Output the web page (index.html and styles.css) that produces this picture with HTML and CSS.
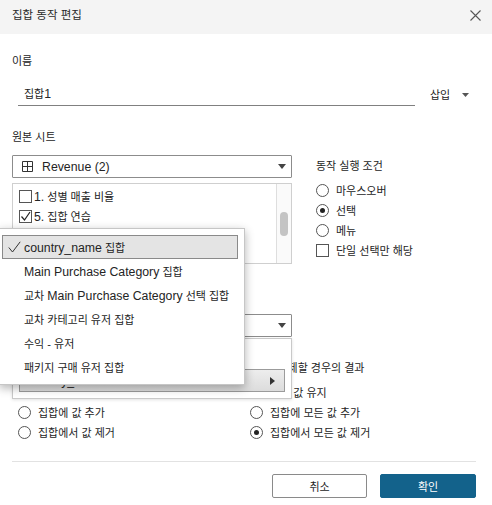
FILE: index.html
```html
<!DOCTYPE html>
<html lang="ko">
<head>
<meta charset="utf-8">
<title>집합 동작 편집</title>
<link rel="stylesheet" href="styles.css">
</head>
<body>
<div class="dialog">
  <header class="titlebar">
    <span class="title">집합 동작 편집</span>
    <svg class="close" width="11" height="11" viewBox="0 0 11 11"><path d="M0.5 0.5 L10.5 10.5 M10.5 0.5 L0.5 10.5" stroke="#555" stroke-width="1.1" fill="none"/></svg>
  </header>

  <main class="content">
    <div class="label">이름</div>
    <div class="name-row">
      <div class="name-input">집합<span class="en">1</span></div>
      <div class="insert">삽입 <svg class="caret" width="7" height="4" viewBox="0 0 7 4"><polygon points="0,0 7,0 3.5,4" fill="#555"/></svg></div>
    </div>

    <div class="label gap-source">원본 시트</div>
    <div class="source-row">
      <div class="source-col">
        <div class="select">
          <svg class="grid-icon" width="11" height="11" viewBox="0 0 11 11"><path d="M0.5 0.5 H10.5 V10.5 H0.5 Z M5.5 0.5 V10.5 M0.5 5.5 H10.5" stroke="#333" stroke-width="1" fill="none"/></svg>
          <span class="select-text en">Revenue (2)</span>
          <svg class="caret push" width="8" height="5" viewBox="0 0 8 5"><polygon points="0,0 8,0 4,5" fill="#444"/></svg>
        </div>
        <div class="sheet-list">
          <div class="sheet-items">
            <div class="check-row"><span class="box"></span><span><span class="en">1.</span> 성별 매출 비율</span></div>
            <div class="check-row"><span class="box checked"><svg width="11" height="11" viewBox="0 0 11 11"><path d="M1.5 5.5 L4.5 9 L10 1" stroke="#222" stroke-width="1.2" fill="none"/></svg></span><span><span class="en">5.</span> 집합 연습</span></div>
          </div>
          <div class="scrollbar"><div class="thumb"></div></div>
        </div>
      </div>

      <div class="run-col">
        <div class="label">동작 실행 조건</div>
        <div class="options">
          <div class="opt"><span class="radio"></span><span>마우스오버</span></div>
          <div class="opt"><span class="radio on"></span><span>선택</span></div>
          <div class="opt"><span class="radio"></span><span>메뉴</span></div>
          <div class="opt"><span class="box"></span><span>단일 선택만 해당</span></div>
        </div>
      </div>
    </div>

    <div class="select target">
      <svg class="caret push" width="8" height="5" viewBox="0 0 8 5"><polygon points="0,0 8,0 4,5" fill="#444"/></svg>
    </div>

    <div class="result-row">
      <div class="result-col left">
        <div class="label-spacer"></div>
        <div class="options small">
          <div class="opt"><span class="radio on"></span></div>
          <div class="opt"><span class="radio"></span><span>집합에 값 추가</span></div>
          <div class="opt"><span class="radio"></span><span>집합에서 값 제거</span></div>
        </div>
      </div>
      <div class="result-col right">
        <div class="label">선택을 해제할 경우의 결과</div>
        <div class="options small">
          <div class="opt"><span class="radio"></span><span>집합 값 유지</span></div>
          <div class="opt"><span class="radio"></span><span>집합에 모든 값 추가</span></div>
          <div class="opt"><span class="radio on"></span><span>집합에서 모든 값 제거</span></div>
        </div>
      </div>
    </div>

    <footer class="footer">
      <button class="btn cancel">취소</button>
      <button class="btn ok">확인</button>
    </footer>
  </main>

  <div class="dropdown">
    <div class="dd-row">
      <span class="en">country_name</span>
      <svg class="push" width="5" height="8" viewBox="0 0 5 8"><polygon points="0,0 5,4 0,8" fill="#333"/></svg>
    </div>
  </div>

  <div class="menu">
    <div class="menu-item active"><span class="mcheck"><svg width="13" height="12" viewBox="0 0 13 12"><path d="M0.8 6.5 L4.5 11 L12.2 0.8" stroke="#333" stroke-width="1" fill="none"/></svg></span><span><span class="en">country_name</span> 집합</span></div>
    <div class="menu-item"><span class="mcheck"></span><span><span class="en">Main Purchase Category</span> 집합</span></div>
    <div class="menu-item"><span class="mcheck"></span><span>교차 <span class="en">Main Purchase Category</span> 선택 집합</span></div>
    <div class="menu-item"><span class="mcheck"></span><span>교차 카테고리 유저 집합</span></div>
    <div class="menu-item"><span class="mcheck"></span><span>수익 - 유저</span></div>
    <div class="menu-item"><span class="mcheck"></span><span>패키지 구매 유저 집합</span></div>
  </div>
</div>
</body>
</html>
```

FILE: styles.css
```css
* { box-sizing: border-box; }
html, body { margin: 0; padding: 0; }
body {
  width: 492px;
  height: 505px;
  overflow: hidden;
  background: #fff;
  font-family: "Liberation Sans", "Noto Sans CJK KR", sans-serif;
  font-size: 11px;
  color: #242424;
}
.en { font-size: 12.3px; }
.dialog { position: relative; width: 492px; height: 505px; overflow: hidden; }

.titlebar {
  height: 34px;
  background: #f4f4f4;
  display: flex;
  align-items: center;
  justify-content: space-between;
  padding: 0 11px 4px 12px;
}
.title { line-height: 16px; color: #2a2a2a; font-size: 11.5px; }
.close { display: block; }

.content { padding: 19px 16px 0 12px; }
.label { line-height: 16px; white-space: nowrap; }
.label-spacer { height: 16px; }

.name-row { display: flex; align-items: center; margin-top: 15px; }
.name-input {
  width: 397px;
  margin-left: 6px;
  height: 22px;
  line-height: 21px;
  padding-left: 6px;
  border-bottom: 1px solid #808080;
}
.insert { margin-left: 15px; display: flex; align-items: center; line-height: 16px; }
.insert .caret { margin-left: 12px; }

.gap-source { margin-top: 23px; }
.source-row { display: flex; margin-top: 10px; }
.source-col { width: 280px; }

.select {
  height: 23px;
  border: 1px solid #8c8c8c;
  border-radius: 1px;
  display: flex;
  align-items: center;
  padding: 0 5px 0 9px;
  background: #fff;
}
.grid-icon { display: block; margin-right: 9px; }
.select-text { white-space: nowrap; }
.push { margin-left: auto; display: block; }

.sheet-list {
  margin-top: 5px;
  height: 81px;
  border: 1px solid #cfcfcf;
  display: flex;
  overflow: hidden;
}
.sheet-items { flex: 1; padding: 2px 0 0 6px; }
.check-row { height: 20px; display: flex; align-items: center; white-space: nowrap; }
.box {
  width: 13px;
  height: 13px;
  border: 1px solid #555;
  background: #fff;
  display: flex;
  align-items: center;
  justify-content: center;
  flex: none;
}
.box svg { display: block; }
.check-row .box { margin-right: 2px; }
.scrollbar { width: 15px; border-left: 1px solid #dedede; background: #fafafa; padding: 28px 0 0 3px; }
.thumb { width: 8px; height: 24px; border-radius: 4px; background: #c4c4c4; }

.run-col { margin-left: 24px; padding-top: 3px; }
.options { margin-top: 6px; }
.opt { height: 20px; display: flex; align-items: center; white-space: nowrap; }
.opt .radio, .opt .box { margin-right: 7px; }
.radio {
  width: 13px;
  height: 13px;
  border: 1px solid #555;
  border-radius: 50%;
  background: #fff;
  display: flex;
  align-items: center;
  justify-content: center;
  flex: none;
}
.radio.on::after { content: ""; width: 5px; height: 5px; border-radius: 50%; background: #222; }

.select.target { width: 280px; margin-top: 50px; }

.result-row { display: flex; margin-top: 23px; }
.result-col.left { width: 232px; }
.options.small { padding-left: 6px; }

.footer {
  margin-top: 19px;
  border-top: 1px solid #e2e2e2;
  padding-top: 12px;
  display: flex;
  justify-content: flex-end;
  gap: 13px;
}
.btn {
  width: 95px;
  height: 24px;
  border-radius: 2px;
  font-family: inherit;
  font-size: 11px;
  padding: 0;
}
.btn.cancel { background: #fff; border: 1px solid #8a8a8a; color: #242424; }
.btn.ok { width: 96px; background: #13628b; border: 1px solid #13628b; color: #fff; }

/* open dropdown of target select */
.dropdown {
  position: absolute;
  left: 12px;
  top: 338px;
  width: 280px;
  height: 61px;
  border: 1px solid #c9c9c9;
  background: #fff;
  box-shadow: 0 1px 3px rgba(0,0,0,0.12);
  padding: 30px 6px 0 6px;
}
.dd-row {
  height: 23px;
  border: 1px solid #9b9b9b;
  background: linear-gradient(#ededed, #dcdcdc);
  display: flex;
  align-items: center;
  padding: 0 9px 0 7px;
}

/* submenu */
.menu {
  position: absolute;
  left: -1px;
  top: 228px;
  width: 246px;
  height: 157px;
  background: #fff;
  border: 1px solid #c6c6c6;
  box-shadow: 0 3px 9px rgba(0,0,0,0.3);
  padding: 6px 0 0 2px;
}
.menu-item {
  width: 236px;
  height: 24px;
  border: 1px solid transparent;
  display: flex;
  align-items: center;
  white-space: nowrap;
  color: #242424;
}
.menu-item.active { background: #e4e4e4; border-color: #8a8a8a; }
.mcheck { width: 21px; flex: none; display: flex; padding-left: 5px; }
.mcheck svg { display: block; }
```
